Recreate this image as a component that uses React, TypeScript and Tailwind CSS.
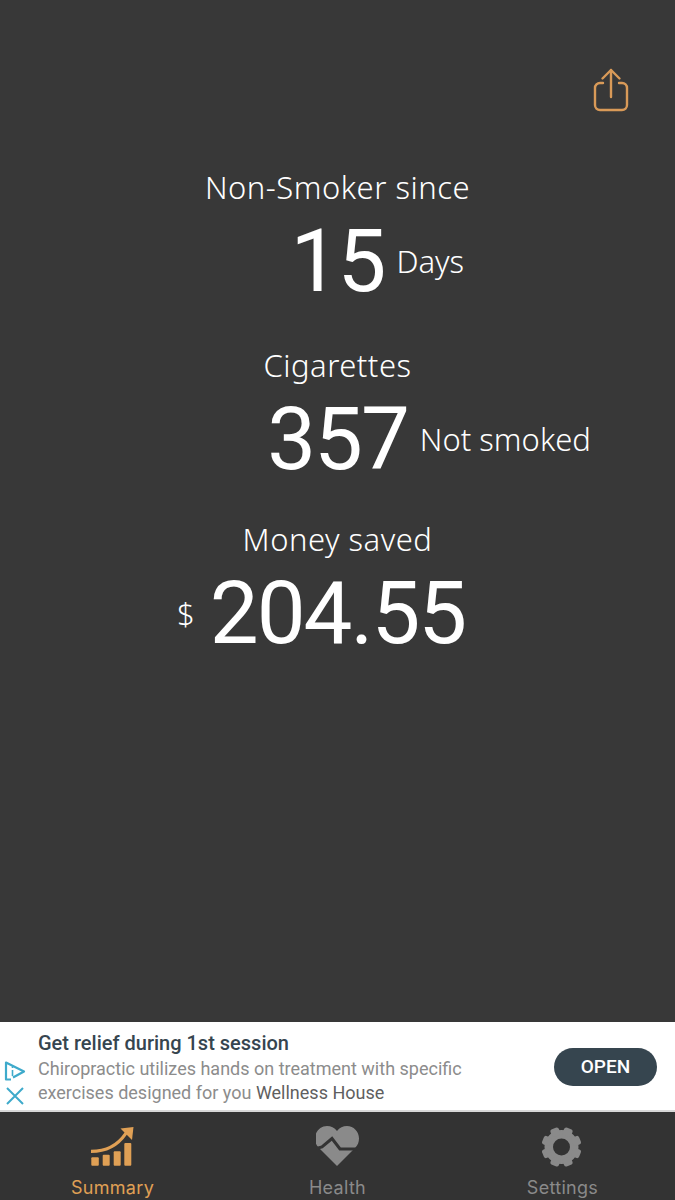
const FONT = "font-['Noto_Sans',sans-serif]";

function ShareIcon() {
  return (
    <svg width="36" height="44" viewBox="0 0 36 44" fill="none" stroke="#d99a58" strokeWidth="2.400" strokeLinecap="round" strokeLinejoin="round">
      <path d="M18 29V2" />
      <path d="M9.500 10.500 18 2l8.500 8.500" />
      <path d="M10 15H7a5 5 0 0 0-5 5v17a5 5 0 0 0 5 5h22a5 5 0 0 0 5-5V20a5 5 0 0 0-5-5h-3" />
    </svg>
  );
}

function SummaryIcon() {
  return (
    <svg width="44" height="42" viewBox="1 0 44 42" fill="#e0a055">
      <rect x="1.300" y="31.300" width="7.500" height="8.500" rx="1" />
      <rect x="12.700" y="28.700" width="7" height="11" rx="1" />
      <rect x="23.700" y="25.300" width="7" height="14.500" rx="1" />
      <rect x="34.300" y="17" width="7" height="22.800" rx="1" />
      <path d="M1 25.300c14 0 26-5 34.500-17.500" fill="none" stroke="#e0a055" strokeWidth="3.200" strokeLinecap="round" />
      <path d="M30.500 2.500 43.500 1l-1.500 13z" strokeLinejoin="round" />
    </svg>
  );
}

function HealthIcon() {
  return (
    <svg width="44" height="42" viewBox="1 0 44 42" fill="#8a8a8a">
      <path d="M22 40 3.500 21.500C1.200 19 0 16 0 12.500 0 5.500 5.500 0 12 0c4 0 7.500 1.800 10 5 2.500-3.200 6-5 10-5 6.500 0 12 5.500 12 12.500 0 3.500-1.200 6.500-3.500 9z" />
      <path d="M1 22.500 7 21l10-8.500 8 10.500h18" fill="none" stroke="#333333" strokeWidth="3" />
    </svg>
  );
}

function GearIcon() {
  return (
    <svg width="42" height="42" viewBox="1.500 0 42 42" fill="#8a8a8a">
      <path
        fillRule="evenodd"
        d="M21 4a17 17 0 1 0 0 34 17 17 0 0 0 0-34zm0 8.500a8.500 8.500 0 1 1 0 17 8.500 8.500 0 0 1 0-17z"
      />
      {[0, 45, 90, 135, 180, 225, 270, 315].map((angle) => (
        <rect key={angle} x="16.500" y="1" width="9" height="8" rx="2.500" transform={`rotate(${angle + 22.500} 21 21)`} />
      ))}
    </svg>
  );
}

function AdChoices() {
  return (
    <svg width="22" height="20" viewBox="0 0 22 20" fill="none" stroke="#3eaacb" strokeWidth="2.200">
      <path d="M7 18.500H2V1.500L20 10.500 9 16.500" strokeLinejoin="round" />
      <path d="M8.500 9v6" strokeWidth="1.600" />
      <path d="M8.500 5.500V7" strokeWidth="1.600" />
    </svg>
  );
}

function Stat({
  label,
  value,
  unit,
  prefix,
  className,
}: {
  label: string;
  value: string;
  unit?: string;
  prefix?: string;
  className?: string;
}) {
  return (
    <section className={`flex flex-col items-center ${className ?? ""}`}>
      <h2 className="text-[31px] leading-[42px] font-light tracking-[0.5px] text-white">{label}</h2>
      <div className="mt-[1px] grid w-full grid-cols-[1fr_auto_1fr] items-center">
        <span className="pr-[15px] text-right text-[31px] leading-[42px] font-light text-white">{prefix}</span>
        <span className="font-['Roboto',sans-serif] text-[87px] leading-[104px] font-normal tracking-[-2px] text-white">{value}</span>
        <span className="pl-[12px] text-[31px] leading-[42px] font-light text-white">{unit}</span>
      </div>
    </section>
  );
}

function NavItem({
  icon,
  label,
  active,
}: {
  icon: React.ReactNode;
  label: string;
  active?: boolean;
}) {
  return (
    <div className="flex flex-col items-center">
      <div className="flex h-[42px] items-center">{icon}</div>
      <span
        className={`mt-[9px] font-['Inter',sans-serif] text-[18px] leading-[22px] tracking-[0.3px] ${active ? "text-[#e0a055]" : "text-[#8a8a8a]"}`}
      >
        {label}
      </span>
    </div>
  );
}

export default function App() {
  return (
    <div className={`flex h-[1200px] w-[675px] flex-col overflow-hidden bg-[#383838] ${FONT}`}>
      <main className="flex-1">
        <div className="flex justify-end pt-[68px] pr-[46px]">
          <ShareIcon />
        </div>
        <div className="mt-[54px] flex flex-col gap-[27px]">
          <Stat label="Non-Smoker since" value="15" unit="Days" />
          <Stat label="Cigarettes" value="357" unit="Not smoked" className="mt-[4px]" />
          <Stat label="Money saved" value="204.55" prefix="$" />
        </div>
      </main>
      <aside className="flex h-[90px] border-b-2 border-[#d8d8d8] bg-white pr-[18px] font-['Roboto',sans-serif]">
        <div className="flex w-[38px] flex-col items-center justify-end gap-[6px] pr-2 pb-[5px]">
          <AdChoices />
          <svg width="18" height="18" viewBox="0 0 18 18" stroke="#3eaacb" strokeWidth="2">
            <path d="M1 1l16 16M17 1 1 17" />
          </svg>
        </div>
        <div className="flex-1 pt-[8px]">
          <div className="text-[20px] leading-[26px] font-medium text-[#36454f]">Get relief during 1st session</div>
          <p className="mt-[1px] text-[18px] leading-[23.500px] text-[#8c8c8c]">
            Chiropractic utilizes hands on treatment with specific
            <br />
            exercises designed for you <span className="text-[#5f5f5f]">Wellness House</span>
          </p>
        </div>
        <button
          type="button"
          className="mt-[26px] h-[38px] w-[103px] rounded-full bg-[#36454f] text-[19px] font-medium text-white"
        >
          OPEN
        </button>
      </aside>
      <nav className="grid h-[88px] grid-cols-3 bg-[#333333] pt-[14px]">
        <NavItem icon={<SummaryIcon />} label="Summary" active />
        <NavItem icon={<HealthIcon />} label="Health" />
        <NavItem icon={<GearIcon />} label="Settings" />
      </nav>
    </div>
  );
}
